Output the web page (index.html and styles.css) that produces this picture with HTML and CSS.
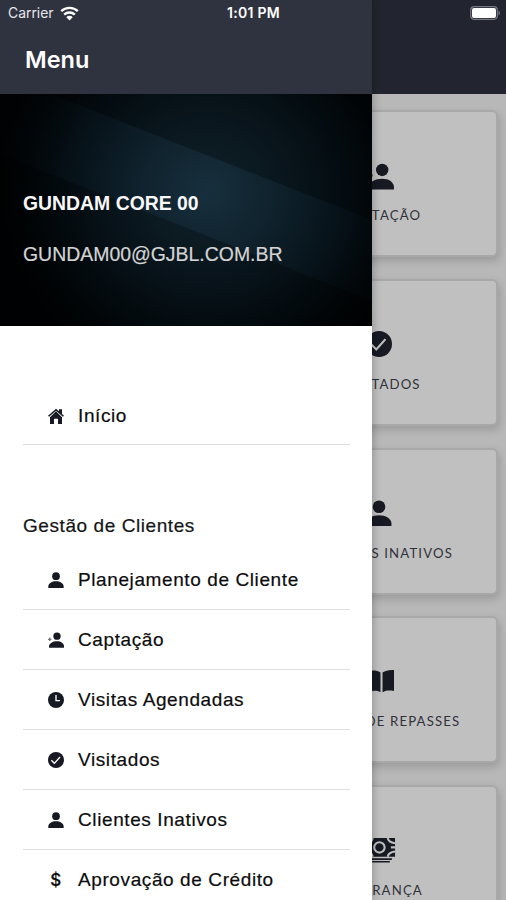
FILE: index.html
```html
<!DOCTYPE html>
<html lang="pt-BR">
<head>
<meta charset="utf-8">
<title>Menu</title>
<link rel="stylesheet" href="styles.css">
</head>
<body>
<svg class="defs" aria-hidden="true">
  <symbol id="person" viewBox="0 0 24 24"><circle cx="12" cy="6.2" r="5.8"/><path d="M.5 24v-2.2C.5 17 6 14 12 14s11.500 3 11.500 7.800V24z"/></symbol>
  <symbol id="person-add" viewBox="0 0 24 24"><circle cx="13.500" cy="6.200" r="5.500"/><path d="M1.500 23.500v-1.700c0-4.800 6-7.800 12-7.800s10.500 3 10.500 7.800v1.700z"/><path class="plus" d="M0 10h1.600V8.400h2V10h1.600v2H3.600v1.600h-2V12H0z"/></symbol>
  <symbol id="check" viewBox="0 0 24 24"><circle cx="12" cy="12" r="12"/><path class="cut" d="M5 12.500l4.500 4.500L18 7.500"/></symbol>
  <symbol id="clock" viewBox="0 0 24 24"><circle cx="12" cy="12" r="12"/><path class="cut" d="M12 4.500V13h6"/></symbol>
  <symbol id="home" viewBox="0 0 24 24"><path d="M0 11.500L12 1l4.500 4V2H21v7l3 2.500-1.500 1.700L12 4.200 1.500 13.200z"/><path d="M3 13.700l9-8.700 9 8.700V24h-6v-8H9v8H3z"/></symbol>
  <symbol id="book" viewBox="0 0 24 24"><path d="M0 2c4-1 8-.4 11 1.300v19C8 20.500 4 20.500 0 21.500zM24 1c-4-.5-8 .3-11 2.300v19c3-1.800 7-1.800 11-1.300z"/></symbol>
  <symbol id="cash" viewBox="0 0 26 24"><path d="M0 0h26v18H0z"/><circle class="cut" cx="11" cy="9" r="5"/><path class="cut" d="M0 4.500Q4 4 4.500 0M0 13.500q4 .5 4.500 4.500M19 0q.5 4 7 5M19 18q.5-4 7-5M22 9h4"/><path d="M2 19.500h21v1.500H2zM4 22h17v1.500H4z"/></symbol>
</svg>

<div class="screen">
  <header class="topbar"></header>
  <main class="cards">
    <section class="card"><svg class="shift"><use href="#person-add"/></svg><span>CAPTAÇÃO</span></section>
    <section class="card"><svg><use href="#check"/></svg><span>VISITADOS</span></section>
    <section class="card"><svg><use href="#person"/></svg><span>CLIENTES INATIVOS</span></section>
    <section class="card"><svg class="wide"><use href="#book"/></svg><span>GESTÃO DE REPASSES</span></section>
    <section class="card"><svg class="wide"><use href="#cash"/></svg><span>COBRANÇA</span></section>
  </main>

  <aside class="drawer">
    <div class="drawer-head"><h1>Menu</h1></div>
    <div class="profile">
      <svg class="beams" viewBox="0 0 372 232" preserveAspectRatio="none"><path class="beam-dark" d="M0 -20L372 126V0H0z"/><path class="beam-shade" d="M0 60L372 207V232H0z"/></svg>
      <strong>GUNDAM CORE 00</strong>
      <span>GUNDAM00@GJBL.COM.BR</span>
    </div>
    <nav>
      <a class="row"><svg><use href="#home"/></svg>Início</a>
      <h2>Gestão de Clientes</h2>
      <a class="row"><svg><use href="#person"/></svg>Planejamento de Cliente</a>
      <a class="row"><svg><use href="#person-add"/></svg>Captação</a>
      <a class="row"><svg><use href="#clock"/></svg>Visitas Agendadas</a>
      <a class="row"><svg><use href="#check"/></svg>Visitados</a>
      <a class="row"><svg><use href="#person"/></svg>Clientes Inativos</a>
      <a class="row"><i>$</i>Aprovação de Crédito</a>
    </nav>
  </aside>

  <div class="status">
    <span class="carrier">Carrier <svg class="wifi" viewBox="0 0 19 15"><path d="M1.200 5.200a12 12 0 0 1 16.600 0M4.200 8.700a7.600 7.600 0 0 1 10.600 0"/><path class="dot" d="M9.500 14.500L6.300 11.200a4.500 4.500 0 0 1 6.400 0z"/></svg></span>
    <b>1:01 PM</b>
    <svg class="battery" viewBox="0 0 31 14"><rect class="shell" x=".7" y=".7" width="26.600" height="12.600" rx="3.500"/><rect class="charge" x="2" y="2" width="24" height="10" rx="2"/><path class="tip" d="M28.500 4.500q3 2.500 0 5z"/></svg>
  </div>
</div>
</body>
</html>
```

FILE: styles.css
```css
* { box-sizing: border-box; }
body { margin: 0; font-family: "Liberation Sans", Arial, sans-serif; }
.defs { position: absolute; width: 0; height: 0; }
.screen { --cut: #fff; position: relative; width: 506px; height: 900px; overflow: hidden; background: #b8b8b8; }
svg { fill: #171923; flex: none; }
.cut { fill: none; stroke: var(--cut); stroke-width: 2; }
.plus { opacity: .6; }

.topbar { height: 94px; background: #22252f; }
.cards { --cut: #c0c0c0; display: flex; flex-direction: column; gap: 21.75px; padding: 16px 8px 0 263px; }
.card {
  height: 147px; flex: none; display: flex; flex-direction: column; align-items: center;
  padding-top: 50.500px; border: 2px solid #a8a8a8; border-radius: 6px;
  background: #c0c0c0; box-shadow: 2px 4px 8px rgba(0,0,0,.16);
}
.card svg { width: 26px; height: 26px; margin-right: 4px; }
.card .shift { width: 27px; height: 27px; margin: 0 0 -1px; }
.card .wide { width: 29px; height: 25px; margin: 0 0 1px 1px; }
.card span {
  margin: 17.500px 0 0 3px; font: 13.2px/18px Lato, sans-serif; letter-spacing: 1.15px;
  color: #30323a; white-space: nowrap;
}

.drawer {
  position: absolute; top: 0; left: 0; width: 372px; height: 900px; overflow: hidden;
  background: #fff; box-shadow: 0 0 9px rgba(0,0,0,.3);
}
.drawer-head { height: 94px; padding: 44px 25px 0; background: #2f333f; }
.drawer h1 { margin: 0; font: 600 23.500px/32px Inter, sans-serif; color: #fff; }
.profile {
  position: relative; height: 232px; padding: 95px 23px 0; display: flex; flex-direction: column; gap: 24px;
  background: radial-gradient(ellipse 210px 200px at 207px 97px, #172f3d 0, #10232e 30%, #08151d 58%, #02070a 84%, #010203 100%);
}
.beams { position: absolute; inset: 0; width: 100%; height: 100%; }
.beam-dark { fill: rgba(0,0,0,.3); }
.beam-shade { fill: rgba(0,0,0,.28); }
.profile strong, .profile span { position: relative; line-height: 28px; white-space: nowrap; }
.profile strong { font-size: 19.400px; color: #f8f8f8; }
.profile span { font-size: 19.450px; color: #d4d4d4; -webkit-text-stroke: .2px #d4d4d4; margin-top: -1px; }

nav { padding: 60px 22px 0 23px; }
.row {
  height: 60px; display: flex; align-items: center; padding-left: 25px;
  border-bottom: 1px solid #dedede; font-size: 19px; letter-spacing: .6px; color: #0c0c0e;
  -webkit-text-stroke: .2px #0c0c0e;
}
.row:first-child { padding-top: 2px; height: 59px; }
.row svg { width: 16px; height: 16px; margin-right: 14px; }
.row i { width: 16px; margin-right: 14px; text-align: center; font: 500 17px/24px Inter, sans-serif; }
nav h2 {
  margin: 66px 0 10px; height: 29px; font-size: 19px; line-height: 29px; font-weight: 400;
  letter-spacing: .57px; color: #141416; -webkit-text-stroke: .2px #141416;
}

.status {
  position: absolute; inset: 0 0 auto; height: 26px; display: grid; grid-template-columns: 1fr auto 1fr;
  align-items: center; padding: 0 7px 0 8px; color: #fff; font: 13.900px/18px Inter, sans-serif;
}
.carrier { display: flex; align-items: center; gap: 6px; color: #e8e8ea; }
.wifi { width: 19px; height: 15px; fill: none; stroke: #fff; stroke-width: 2.400; }
.wifi .dot { fill: #fff; stroke: none; }
.status b { font-weight: 600; font-size: 14px; letter-spacing: .3px; }
.battery { width: 31px; height: 14px; justify-self: end; margin-right: -2px; }
.shell { fill: none; stroke: #777982; stroke-width: 1.200; }
.charge { fill: #fff; }
.tip { fill: #777982; }
```
